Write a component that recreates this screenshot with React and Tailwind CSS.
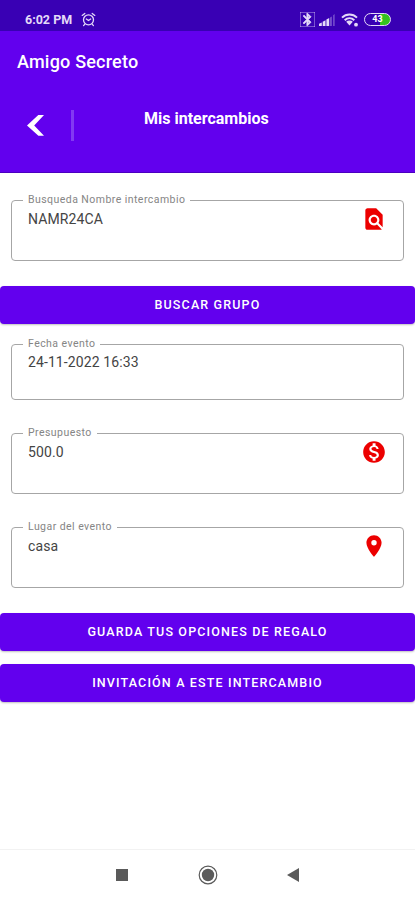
import React, { useState } from 'react';
import { MdFindInPage, MdMonetizationOn, MdPlace, MdBluetooth } from 'react-icons/md';

const StatusBar = () => (
  <div className="h-[31px] bg-[#3900b4] flex items-center justify-between pl-[25px] pr-[24px] pt-[8px] text-[#e4daf8]">
    <div className="flex items-center">
      <span className="w-[50px] text-[12.5px] leading-4 font-bold whitespace-nowrap">6:02 PM</span>
      <svg width="15" height="15" viewBox="0 0 15 15" className="ml-[6px]" fill="none" stroke="currentColor" strokeWidth="1.3" strokeLinecap="round">
        <circle cx="7.5" cy="7.8" r="5" />
        <path d="M1.2 3.4 3.8 1.4M13.8 3.4 11.2 1.4M3.8 12.2 2.6 13.6M11.2 12.2l1.2 1.4M5.3 7l2.2 1.5L9.7 7" />
      </svg>
    </div>
    <div className="flex items-center">
      <MdBluetooth size={15} stroke="currentColor" strokeWidth="1.2" />
      <svg width="16" height="12" viewBox="0 0 16 12" className="ml-[4px]" fill="currentColor">
        <path d="M0 12V9.8L2.8 8.4V12zM3.7 12V7.8L6.5 6.2V12zM7.4 12V5.6L10.2 4V12z" />
        <path d="M11.1 12V3.4L12.8 2.4V12zM14.2 12V1.2L15.6 0V12z" opacity="0.4" />
      </svg>
      <svg width="18" height="14" viewBox="0 0 18 14" className="ml-[6px]" fill="none" stroke="currentColor" strokeWidth="2">
        <path d="M1 4.6C5.3.4 11.7.4 16 4.6M3.7 7.3c2.8-2.7 6.8-2.7 9.6 0" />
        <path d="M5.2 8.8a4.6 4.6 0 0 1 6.6 0L8.5 12.4z" fill="currentColor" stroke="none" />
        <circle cx="15" cy="11.7" r="1.9" fill="currentColor" stroke="none" />
      </svg>
      <div className="ml-[5px] w-[27px] h-[13px] rounded-full border-[1.5px] border-current bg-linear-to-r from-transparent from-60% to-[#35c31f] to-60% flex items-center justify-center">
        <span className="text-[9px] leading-none font-bold text-white">43</span>
      </div>
    </div>
  </div>
);

const Field = ({ label, value, onChange, icon: Icon, className }) => (
  <fieldset className={`mx-[11px] min-w-0 flex flex-col border border-[#a6a6a6] rounded-[4px] pl-[16px] pr-[16px] ${className}`}>
    <legend className="-ml-[5px] h-[12px] px-[5px] text-[10.5px] leading-[12px] tracking-[0.45px] text-[#858585] whitespace-nowrap">
      {label}
    </legend>
    <div className="flex-1 flex items-center pb-[5px]">
      <input
        type="text"
        value={value}
        onChange={(e) => onChange(e.target.value)}
        className="flex-1 min-w-0 h-6 text-[14px] tracking-[0.1px] text-[#444] focus:outline-none"
      />
      {Icon && <Icon size={26} className="text-[#ec0000]" />}
    </div>
  </fieldset>
);

const Button = ({ children, className }) => (
  <button
    type="button"
    className={`w-full h-[38px] shrink-0 rounded-[4px] bg-[#6200ee] text-white text-[12.5px] font-medium tracking-[1.15px] shadow-[0_1px_2px_rgba(0,0,0,0.25)] ${className}`}
  >
    {children}
  </button>
);

const App = () => {
  const [grupo, setGrupo] = useState('NAMR24CA');
  const [fecha, setFecha] = useState('24-11-2022 16:33');
  const [presupuesto, setPresupuesto] = useState('500.0');
  const [lugar, setLugar] = useState('casa');

  return (
    <div className="w-full h-[900px] bg-white flex flex-col overflow-hidden font-[Roboto,sans-serif]">
      <StatusBar />

      {/* Toolbar */}
      <header className="h-[142px] bg-[#6200ee] text-white border-b border-[#4b00c0]">
        <h1 className="h-[61px] flex items-center pl-[17px] text-[18px] font-medium tracking-[0.2px]">Amigo Secreto</h1>
        <div className="flex items-start">
          <button type="button" aria-label="Regresar" className="ml-[27px] mt-[23px]">
            <svg width="17" height="21" viewBox="0 0 17 21" fill="currentColor" className="block">
              <path d="M11.3 0H17L7.2 10.4 17 20.8h-5.6L0 10.4z" />
            </svg>
          </button>
          <div className="ml-[27px] mt-[18px] w-[3px] h-[31px] bg-[#8239f2]" />
          <h2 className="ml-[70px] mt-[17px] text-[16px] leading-5 font-bold">Mis intercambios</h2>
        </div>
      </header>

      {/* Form */}
      <main className="flex-1 flex flex-col">
        <Field label="Busqueda Nombre intercambio" value={grupo} onChange={setGrupo} icon={MdFindInPage} className="mt-[21px] h-[67px]" />
        <Button className="mt-[25px]">BUSCAR GRUPO</Button>
        <Field label="Fecha evento" value={fecha} onChange={setFecha} className="mt-[14px] h-[62px]" />
        <Field label="Presupuesto" value={presupuesto} onChange={setPresupuesto} icon={MdMonetizationOn} className="mt-[27px] h-[67px]" />
        <Field label="Lugar del evento" value={lugar} onChange={setLugar} icon={MdPlace} className="mt-[27px] h-[67px]" />
        <Button className="mt-[25px]">GUARDA TUS OPCIONES DE REGALO</Button>
        <Button className="mt-[13px]">INVITACIÓN A ESTE INTERCAMBIO</Button>
      </main>

      {/* Android navigation */}
      <nav className="h-[51px] border-t border-[#f2f2f2] flex items-center pl-[116px] text-[#5a5a5a]">
        <div className="w-[12px] h-[12px] bg-current" />
        <svg width="20" height="20" viewBox="0 0 20 20" className="ml-[70px]">
          <circle cx="10" cy="10" r="8.8" fill="none" stroke="currentColor" strokeWidth="1.2" />
          <circle cx="10" cy="10" r="6.2" fill="currentColor" />
        </svg>
        <svg width="12" height="14" viewBox="0 0 12 14" className="ml-[69px]" fill="currentColor">
          <path d="M12 0v14L0 7z" />
        </svg>
      </nav>
    </div>
  );
};

export default App;
